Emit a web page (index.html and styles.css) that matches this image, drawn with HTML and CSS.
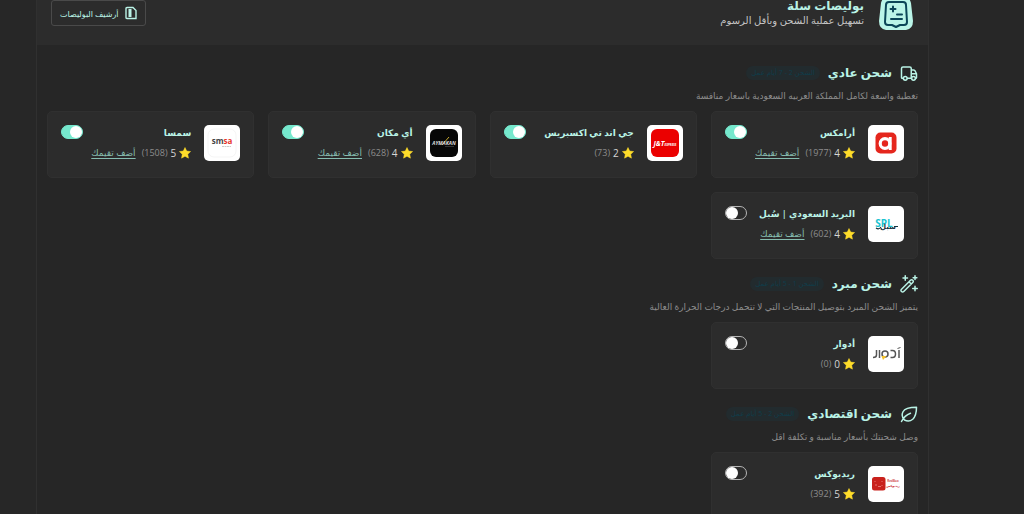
FILE: index.html
```html
<!DOCTYPE html>
<html lang="ar" dir="rtl">
<head>
    <meta charset="UTF-8">
    <meta name="viewport" content="width=device-width, initial-scale=1.0">
    <title>بوليصات سلة</title>
    <link rel="stylesheet" href="styles.css">
</head>
<body>
    <svg class="sprite" aria-hidden="true">
        <symbol id="star" viewBox="0 0 24 24">
            <path d="M12 1l3.4 7.1 7.8 1-5.7 5.4 1.4 7.8L12 18.5l-6.9 3.8 1.4-7.8L.8 9.1l7.8-1z" fill="#fedc2a" stroke="#fedc2a" stroke-linejoin="round"/>
        </symbol>
    </svg>

    <main class="panel">
        <header class="panel-header">
            <svg class="app-icon" viewBox="0 0 34 34" aria-hidden="true">
                <path d="M8 1Q17-1 26 1Q31 2 32 7L34 25Q34 33 27 34H7Q0 33 0 25L2 7Q3 2 8 1z" fill="#baf5e8"/>
                <g fill="none" stroke="#0b4658" stroke-width="2" stroke-linecap="round" stroke-linejoin="round">
                    <path d="M10 6h14q3 0 3 3l1 17q0 3-3 3h-4l-4 2-4-2H9q-3 0-3-3L7 9q0-3 3-3z"/>
                    <path d="M14 10.500v5M11.500 13h5M18 18.500h5M12 23h11"/>
                </g>
            </svg>
            <div class="header-text">
                <h1 class="header-title">بوليصات سلة</h1>
                <p class="header-subtitle">تسهيل عملية الشحن وبأقل الرسوم</p>
            </div>
            <button class="archive-btn" type="button">
                <svg class="archive-icon" viewBox="0 0 12 14" fill="none" stroke="#baf3e6" aria-hidden="true">
                    <path d="M2 1.500h6l3 3v8H2q-1 0-1-1v-9q0-1 1-1z" stroke-width="1.400"/>
                    <path d="M5 3v8" stroke-width="3"/>
                </svg>
                <span>أرشيف البوليصات</span>
            </button>
        </header>

        <div class="panel-body">
            <section class="section">
                <div class="section-head">
                    <svg class="section-icon" viewBox="0 0 24 24" aria-hidden="true">
                        <path d="M4 19H3q-1 0-1-1V6q0-2 2-2h9q2 0 2 2v12M10 19h5M15 8h3q1 0 2 1l2 4v5q0 1-1 1M15 13h7"/>
                        <circle cx="7" cy="19" r="2.500"/>
                        <circle cx="18" cy="19" r="2.500"/>
                    </svg>
                    <h2 class="section-title">شحن عادي</h2>
                    <span class="badge">الشحن 2 - 7 أيام عمل</span>
                </div>
                <p class="section-text">تغطية واسعة لكامل المملكة العربيه السعودية باسعار منافسة</p>
                <div class="cards">
                    <article class="card">
                        <svg class="logo" viewBox="0 0 36 36" aria-hidden="true">
                            <rect x="7.500" y="7.500" width="21" height="21" rx="5" fill="#e5261d"/>
                            <circle cx="17" cy="18.500" r="4.800" fill="none" stroke="#fff" stroke-width="3.200"/>
                            <path d="M22.200 12v13" stroke="#fff" stroke-width="3"/>
                        </svg>
                        <div class="card-info">
                            <label class="card-name" for="aramex">أرامكس</label>
                            <div class="rating">
                                <svg class="star"><use href="#star"/></svg>
                                <span class="score">4</span>
                                <span class="count">(1977)</span>
                                <a class="rate-link" href="#">أضف تقيمك</a>
                            </div>
                        </div>
                        <input class="toggle" type="checkbox" id="aramex" checked>
                    </article>

                    <article class="card">
                        <svg class="logo" viewBox="0 0 36 36" aria-hidden="true">
                            <rect x="4" y="4" width="28" height="28" rx="6" fill="#eb0000"/>
                            <text class="logo-text logo-jt" x="18" y="21" fill="#fff">J&amp;T<tspan class="logo-jt-small">EXPRESS</tspan></text>
                        </svg>
                        <div class="card-info">
                            <label class="card-name" for="jt">جي اند تي اكسبريس</label>
                            <div class="rating">
                                <svg class="star"><use href="#star"/></svg>
                                <span class="score">2</span>
                                <span class="count">(73)</span>
                            </div>
                        </div>
                        <input class="toggle" type="checkbox" id="jt" checked>
                    </article>

                    <article class="card">
                        <svg class="logo" viewBox="0 0 36 36" aria-hidden="true">
                            <rect x="4" y="4" width="28" height="28" rx="6" fill="#070707"/>
                            <path d="M16 20l7-8" stroke="#c6a92d"/>
                            <text class="logo-text logo-aymakan" x="18" y="20" fill="#ddd">AYMAKAN</text>
                            <path d="M19 21.500h9" stroke="#555" stroke-width=".6"/>
                        </svg>
                        <div class="card-info">
                            <label class="card-name" for="aymakan">أي مكان</label>
                            <div class="rating">
                                <svg class="star"><use href="#star"/></svg>
                                <span class="score">4</span>
                                <span class="count">(628)</span>
                                <a class="rate-link" href="#">أضف تقيمك</a>
                            </div>
                        </div>
                        <input class="toggle" type="checkbox" id="aymakan" checked>
                    </article>

                    <article class="card">
                        <svg class="logo" viewBox="0 0 36 36" aria-hidden="true">
                            <rect x="4" y="4" width="28" height="28" rx="6" fill="none" stroke="#eee" stroke-width=".6"/>
                            <text class="logo-text logo-smsa" x="18" y="19" fill="#444">sm<tspan fill="#e8352d">sa</tspan></text>
                            <path d="M18 21.500h9" stroke="#ccc" stroke-dasharray="2 .5"/>
                        </svg>
                        <div class="card-info">
                            <label class="card-name" for="smsa">سمسا</label>
                            <div class="rating">
                                <svg class="star"><use href="#star"/></svg>
                                <span class="score">5</span>
                                <span class="count">(1508)</span>
                                <a class="rate-link" href="#">أضف تقيمك</a>
                            </div>
                        </div>
                        <input class="toggle" type="checkbox" id="smsa" checked>
                    </article>

                    <article class="card">
                        <svg class="logo" viewBox="0 0 36 36" aria-hidden="true">
                            <text class="logo-text logo-spl" x="16" y="21" fill="#19c3d0">SPL</text>
                            <path d="M8 22q3 2 5-1M26 20.500h4" fill="none" stroke="#17333d" stroke-width="1.200"/>
                            <text class="logo-text logo-sobol" x="20" y="23" fill="#17333d">سبل</text>
                        </svg>
                        <div class="card-info">
                            <label class="card-name" for="spl">البريد السعودي | سُبل</label>
                            <div class="rating">
                                <svg class="star"><use href="#star"/></svg>
                                <span class="score">4</span>
                                <span class="count">(602)</span>
                                <a class="rate-link" href="#">أضف تقيمك</a>
                            </div>
                        </div>
                        <input class="toggle" type="checkbox" id="spl">
                    </article>
                </div>
            </section>

            <section class="section">
                <div class="section-head">
                    <svg class="section-icon" viewBox="0 0 24 24" aria-hidden="true">
                        <path d="M2 19L14 7q1.500-1.500 3 0t0 3L5 22q-1.500 1.500-3 0t0-3zM12 9l3 3M20 1v5M17.500 3.500h5M7 1v6M4 4h6M20 15v6M17 18h6"/>
                    </svg>
                    <h2 class="section-title">شحن مبرد</h2>
                    <span class="badge">الشحن 1 - 5 أيام عمل</span>
                </div>
                <p class="section-text">يتميز الشحن المبرد بتوصيل المنتجات التي لا تتحمل درجات الحرارة العالية</p>
                <div class="cards">
                    <article class="card">
                        <svg class="logo" viewBox="0 0 36 36" aria-hidden="true">
                            <g fill="none" stroke="#555" stroke-width="1.500">
                                <path d="M31 14v8M22.500 14.500h2q3 0 3 3.500t-3 3.500h-2M11.500 14v8M8.500 14v5q0 2.500-3.500 2.500"/>
                                <circle cx="17" cy="18" r="3"/>
                                <path d="M29.500 12.500l3-1" stroke-width="1"/>
                            </g>
                            <path d="M13.500 20h5l-3.500 4z" fill="#f5c22b"/>
                        </svg>
                        <div class="card-info">
                            <label class="card-name" for="adwar">أدوار</label>
                            <div class="rating">
                                <svg class="star"><use href="#star"/></svg>
                                <span class="score">0</span>
                                <span class="count">(0)</span>
                            </div>
                        </div>
                        <input class="toggle" type="checkbox" id="adwar">
                    </article>
                </div>
            </section>

            <section class="section">
                <div class="section-head">
                    <svg class="section-icon" viewBox="0 0 24 24" aria-hidden="true">
                        <path d="M22 3Q7 3 4 9q-3 6 2 11 6 3 11-1 5-5 5-16zM2 22Q6 14 14 11"/>
                    </svg>
                    <h2 class="section-title">شحن اقتصادي</h2>
                    <span class="badge">الشحن 2 - 5 أيام عمل</span>
                </div>
                <p class="section-text">وصل شحنتك بأسعار مناسبة و تكلفة اقل</p>
                <div class="cards">
                    <article class="card">
                        <svg class="logo" viewBox="0 0 36 36" aria-hidden="true">
                            <rect x="4" y="11" width="13.500" height="13.500" rx="2.500" fill="#c9211c"/>
                            <path d="M7 15v1M14 15v1M7 19h2M10 20.500h3M14 19v1" stroke="#ee8a85" stroke-width=".8"/>
                            <text class="logo-text logo-redbox" x="25" y="16" fill="#d0544f">RedBox</text>
                            <text class="logo-text logo-redbox" x="25" y="21" fill="#c9211c">ريدبوكس</text>
                        </svg>
                        <div class="card-info">
                            <label class="card-name" for="redbox">ريدبوكس</label>
                            <div class="rating">
                                <svg class="star"><use href="#star"/></svg>
                                <span class="score">5</span>
                                <span class="count">(392)</span>
                            </div>
                        </div>
                        <input class="toggle" type="checkbox" id="redbox">
                    </article>
                </div>
            </section>
        </div>
    </main>
</body>
</html>
```
FILE: styles.css
```css
:root {
    --page-bg: #272727;
    --panel-bg: #262626;
    --card-bg: #2c2c2c;
    --line: #303030;
    --mint: #baf3e6;
    --toggle: #76e8cd;
    --font-family: "Open Sans", "DejaVu Sans", sans-serif;
}

* {
    margin: 0;
    padding: 0;
    box-sizing: border-box;
}

html {
    scrollbar-width: none;
}

body {
    font-family: var(--font-family);
    font-size: 10px;
    background: var(--page-bg);
    color: var(--mint);
}

.sprite {
    display: none;
}

/* pulled up under the top bar */
.panel {
    margin: -14px 95px 0 36px;
    background: var(--panel-bg);
    border: 1px solid var(--line);
}

.panel-header {
    display: flex;
    align-items: center;
    gap: 15px;
    height: 58px;
    padding: 0 15px 6px 14px;
    background: var(--card-bg);
}

.app-icon {
    width: 34px;
    height: 34px;
}

.header-text {
    flex: 1;
}

.header-title {
    font-size: 12px;
    line-height: 14px;
    font-weight: 600;
}

.header-subtitle {
    font-size: 10px;
    line-height: 14px;
    color: #c4c4c4;
}

.archive-btn {
    display: flex;
    align-items: center;
    justify-content: center;
    gap: 6px;
    height: 26px;
    padding: 0 8px;
    font-family: inherit;
    font-size: 8px;
    color: var(--mint);
    background: transparent;
    border: 1px solid #4a4a4a;
    border-radius: 3px;
    cursor: pointer;
}

.archive-icon {
    width: 12px;
    height: 14px;
}

.panel-body {
    padding: 15px 10px 0;
}

.section {
    margin-bottom: 12px;
}

.section-head {
    display: flex;
    align-items: center;
    gap: 8px;
    height: 26px;
}

.section-icon {
    width: 18px;
    height: 18px;
    fill: none;
    stroke: var(--mint);
    stroke-width: 2;
    stroke-linecap: round;
    stroke-linejoin: round;
}

.section-title {
    font-size: 12px;
    line-height: 20px;
    font-weight: 600;
}

.badge {
    padding: 0 5px;
    font-size: 7px;
    line-height: 14px;
    color: #103d4a;
    background: #222b2e;
    border-radius: 7px;
}

.section-text {
    margin-bottom: 5px;
    font-size: 9px;
    line-height: 20px;
    color: #8c8c8c;
}

.cards {
    display: grid;
    grid-template-columns: repeat(4, minmax(0, 1fr));
    gap: 14px;
}

.card {
    display: flex;
    align-items: flex-start;
    gap: 13px;
    height: 67px;
    padding: 13px;
    background: var(--card-bg);
    border: 1px solid var(--line);
    border-radius: 5px;
}

.logo {
    flex: none;
    width: 36px;
    height: 36px;
    background: #fff;
    border-radius: 5px;
}

.logo-text {
    font-family: "Open Sans", "DejaVu Sans", sans-serif;
    font-weight: bold;
    text-anchor: middle;
    direction: ltr;
}

.logo-jt {
    font-size: 7px;
    font-style: italic;
}

.logo-jt-small {
    font-size: 3px;
}

.logo-aymakan {
    font-size: 5px;
    font-style: italic;
}

.logo-smsa {
    font-size: 8px;
}

.logo-spl {
    font-size: 10px;
}

.logo-sobol {
    font-size: 7px;
}

.logo-redbox {
    font-size: 3px;
}

/* the rate link may run under the toggle */
.card-info {
    flex: 1;
    min-width: 0;
    white-space: nowrap;
}

.card-name {
    display: block;
    font-size: 9px;
    line-height: 16px;
    font-weight: 600;
}

.rating {
    display: flex;
    align-items: center;
    gap: 3px;
    height: 24px;
    line-height: 16px;
}

.star {
    flex: none;
    width: 12px;
    height: 12px;
}

.score {
    color: #d6d6d6;
}

.count {
    font-size: 9px;
    color: #8c8c8c;
}

.rate-link {
    margin-right: 3px;
    font-size: 9px;
    color: #86bdb0;
    text-underline-offset: 2px;
}

.toggle {
    appearance: none;
    flex: none;
    display: flex;
    width: 22px;
    height: 14px;
    border: 1px solid #b5b5b5;
    border-radius: 7px;
    direction: ltr;
    cursor: pointer;
}

.toggle::before {
    content: "";
    width: 12px;
    height: 12px;
    background: #fff;
    border-radius: 50%;
}

.toggle:checked {
    justify-content: flex-end;
    background: var(--toggle);
    border-color: var(--toggle);
}
```
